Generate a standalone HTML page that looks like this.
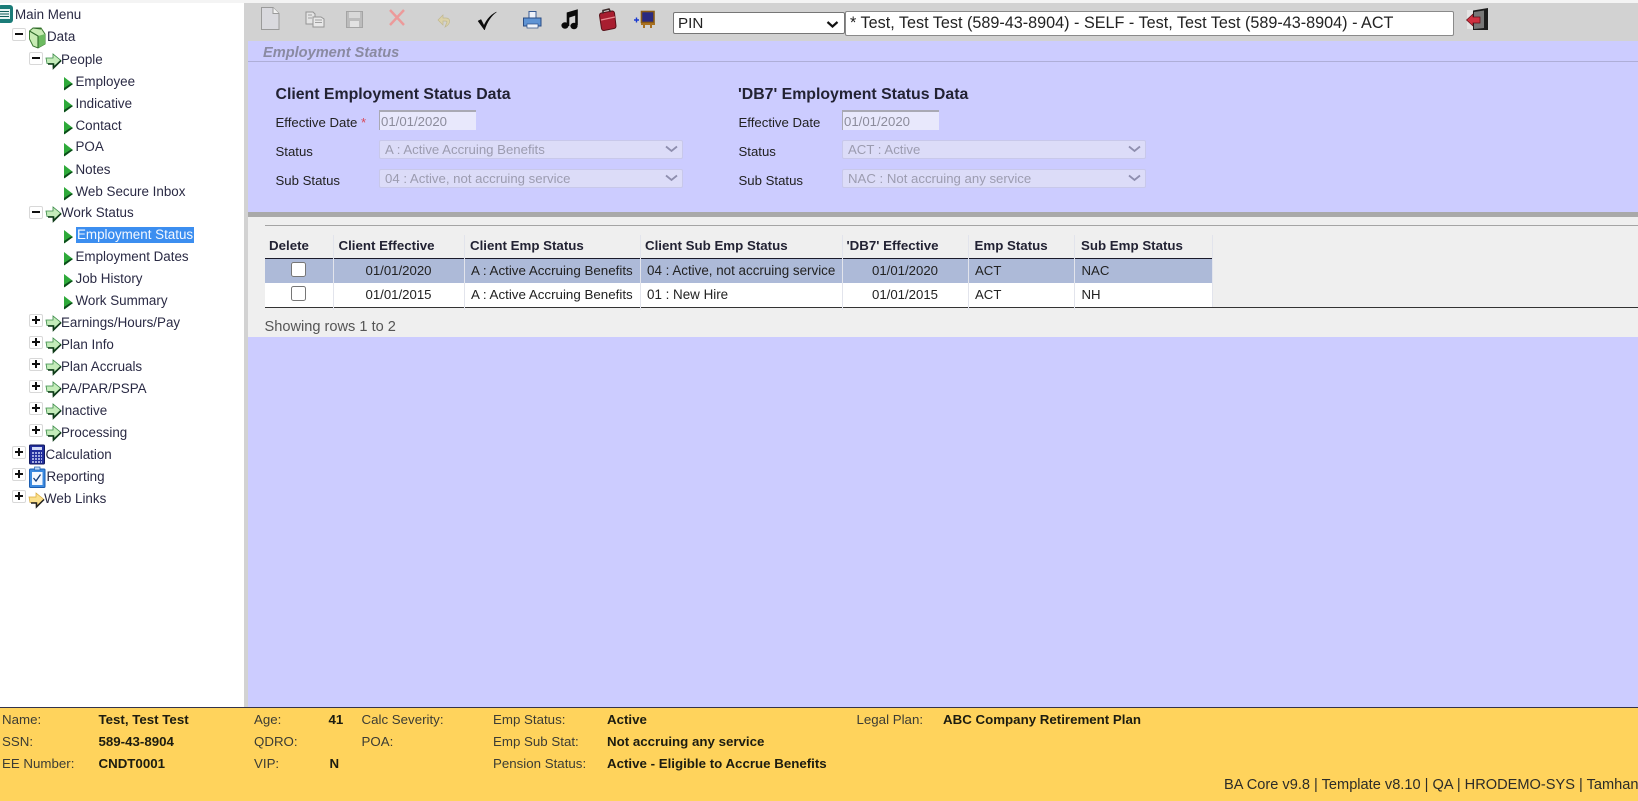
<!DOCTYPE html>
<html lang="en"><head><meta charset="utf-8"><title>Employment Status</title>
<style>
html,body{margin:0;padding:0;width:1638px;height:801px;overflow:hidden;background:#fff}
body{position:relative;font-family:"Liberation Sans",Arial,sans-serif;font-size:13.2px;color:#222}
#page{position:absolute;left:0;top:0;width:1638px;height:801px;overflow:hidden;filter:blur(.35px)}
.b{position:absolute}
.t{position:absolute;white-space:nowrap;line-height:16px;height:16px}
.h{font-weight:bold;color:#223;font-size:13.3px}
.c{text-align:center}
.f{font-size:13.3px}
.fb{font-size:13.3px;font-weight:bold;color:#1c1c10}
.fl{color:#3c3c34}
.tree{color:#2a2a44;font-size:13.4px}
.ctl{position:absolute;box-sizing:border-box;margin:0;font-family:"Liberation Sans",Arial,sans-serif}
select.dis{appearance:none;-webkit-appearance:none;background:#dcdcf8;border:1px solid #c8c8ea;border-radius:2px;color:#9c9cb0;font-size:13.2px;padding:0 0 0 5px;height:19px;width:304px;opacity:1}
input.dis{background:#e8e8fc;border:0;border-top:2px solid #a9a9b4;border-left:1px solid #a9a9b4;color:#8c8c9c;font-size:13.2px;padding:0 0 0 1px;height:20px;width:97px}
.pm{position:absolute;width:14px;height:13px;box-sizing:border-box;border:1px solid #d8d8d8;border-radius:2px;background:#fff}
.pm:before{content:"";position:absolute;left:2px;top:4px;width:8px;height:2px;background:#111}
.pm.p:after{content:"";position:absolute;left:5px;top:1px;width:2px;height:8px;background:#111}
.v{position:absolute;width:1px;background:#e2e4ec}
</style></head><body><div id="page">

<!-- main backgrounds -->
<div class="b" style="left:0;top:0;width:1638px;height:3px;background:#f4f4f4"></div>
<div class="b" style="left:0;top:3px;width:244px;height:705px;background:#fff"></div>
<div class="b" style="left:244px;top:3px;width:4px;height:705px;background:#d2d2d2"></div>
<div class="b" style="left:248px;top:3px;width:1390px;height:38px;background:#d2d2d2"></div>
<div class="b" style="left:248px;top:41px;width:1390px;height:667px;background:#ccccff"></div>
<div class="b" style="left:248px;top:61px;width:1390px;height:1px;background:#aeaed8"></div>

<!-- TREE -->
<div class="pm" style="left:12px;top:28px"></div>
<div class="pm" style="left:29px;top:52px"></div>
<div class="pm" style="left:29px;top:206px"></div>
<div class="pm p" style="left:29px;top:314px"></div>
<div class="pm p" style="left:29px;top:336px"></div>
<div class="pm p" style="left:29px;top:358px"></div>
<div class="pm p" style="left:29px;top:380px"></div>
<div class="pm p" style="left:29px;top:402px"></div>
<div class="pm p" style="left:29px;top:424px"></div>
<div class="pm p" style="left:12px;top:446px"></div>
<div class="pm p" style="left:12px;top:468px"></div>
<div class="pm p" style="left:12px;top:490px"></div>

<svg class="b" style="left:0;top:0" width="1638" height="801" viewBox="0 0 1638 801">
<defs>
<g id="tri"><path d="M1 0L10 7L2 13L1 13Z" fill="#2eaa3a"/><path d="M1 13.500L10 7L8 6.500L1 11Z" fill="#0c4a1a"/></g>
<g id="arr"><path d="M0 4H7V0L15 6.500L7 13V9.500H1Z" fill="#c4ecba" stroke="#3a8a48" stroke-width=".8"/><path d="M2 10H7.500V14L15 6.500" fill="none" stroke="#0f3a18" stroke-width="1.600"/></g>
</defs>
<!-- main menu icon -->
<rect x="-2" y="5" width="15" height="18" rx="3" fill="#1b7c78"/>
<rect x="-1" y="9" width="11" height="10" fill="#e8f4f2"/>
<path d="M0 11.500H9M0 14H9M0 16.500H9" stroke="#14605c" stroke-width="1"/>
<!-- data book -->
<path d="M29.500 31L33 28H41L45 34V44L38 48L33 46L29.500 39Z" fill="#c8ecb4" stroke="#3c7a32" stroke-width="1"/>
<path d="M38 36L45 34V44L38 48Z" fill="#6cba60"/>
<path d="M29.500 31L38 36V48M33 28L41 29" fill="none" stroke="#2f6a2a" stroke-width="1.100"/>
<!-- group arrows -->
<use href="#arr" x="46" y="54"/><use href="#arr" x="46" y="207"/>
<use href="#arr" x="46" y="316"/><use href="#arr" x="46" y="338"/><use href="#arr" x="46" y="360"/>
<use href="#arr" x="46" y="382"/><use href="#arr" x="46" y="404"/><use href="#arr" x="46" y="426"/>
<!-- leaf triangles -->
<use href="#tri" x="63" y="77"/><use href="#tri" x="63" y="99"/><use href="#tri" x="63" y="121"/>
<use href="#tri" x="63" y="143"/><use href="#tri" x="63" y="165"/><use href="#tri" x="63" y="187"/>
<use href="#tri" x="63" y="230"/><use href="#tri" x="63" y="252"/><use href="#tri" x="63" y="274"/><use href="#tri" x="63" y="296"/>
<!-- calculator -->
<rect x="29.500" y="445" width="15" height="19" rx="1" fill="#222e9c" stroke="#10185e"/>
<rect x="32" y="447" width="10" height="3" fill="#d4dcf8"/>
<path d="M32 453H42M32 456H42M32 459H42M32 462H42" stroke="#cfd6f8" stroke-width="1.400" stroke-dasharray="2 1"/>
<!-- reporting clipboard -->
<rect x="29.500" y="469" width="15.500" height="18.500" rx="1" fill="#3c8ae0" stroke="#1a5cb0"/>
<rect x="32" y="472" width="10.500" height="13" fill="#f4f8ff"/>
<rect x="34.500" y="467" width="5.500" height="3" fill="#bcd8f6" stroke="#1a5cb0" stroke-width=".7"/>
<path d="M33.500 478L36 481L40.500 474.500" fill="none" stroke="#113a78" stroke-width="1.300"/>
<!-- web links arrow -->
<path d="M29 497H36V493L44 499.500L36 506V502.500H30Z" fill="#fbe08c" stroke="#d8a838" stroke-width=".7"/>
<path d="M31 503H36.500V507L44 499.500" fill="none" stroke="#222" stroke-width="1.500"/>

<!-- TOOLBAR -->
<path d="M261.500 7.500H273L279 13.500V29.500H261.500Z" fill="#d9d9de" stroke="#9a9a9a"/><path d="M273 7.500V13.500H279" fill="#f2f2f2" stroke="#9a9a9a"/>
<path d="M306 12H313L315 14V24H306Z" fill="#e4e4e4" stroke="#949494"/><path d="M313 17H321L324 19V27H313Z" fill="#e8e8e8" stroke="#949494"/><path d="M315 20H322M315 22.500H322M308 15H312M308 18H312" stroke="#a0a0a0"/>
<rect x="346.500" y="11.500" width="16" height="16" fill="#bcbcbc" stroke="#a4a4a4"/><rect x="349" y="12" width="11" height="6" fill="#d8d8d8"/><rect x="350" y="21" width="9" height="6" fill="#e2e2e2"/>
<path d="M390 10L404 25M404 10L390 25" stroke="#ec9a9a" stroke-width="2.400"/>
<path d="M438 20L443 15V18H446C451 18 451 24 445 27L447 22C447 21 446 21 444 21H443V25Z" fill="#dcd2a8" stroke="#c0b890" stroke-width=".7"/>
<path d="M478 21L484.500 30C487 22 491 16 496.500 12C490 15 486.500 20 484 25.500L481 19.500Z" fill="#0c0c0c" stroke="#0c0c0c" stroke-width=".5"/>
<path d="M529 11.500H536V18H529Z" fill="#eef2fa" stroke="#3a5c94"/>
<path d="M523.500 18H541V26H523.500Z" fill="#5f94d4" stroke="#2a4c84"/><rect x="527" y="24" width="11" height="4" fill="#f0f4fa" stroke="#2a4c84" stroke-width=".7"/>
<path d="M568 26V13.500L576.500 11V25" fill="none" stroke="#0a0a0a" stroke-width="2.600"/><ellipse cx="565" cy="25.500" rx="3.600" ry="3.200" fill="#0a0a0a"/><ellipse cx="574" cy="26" rx="3.600" ry="3.200" fill="#0a0a0a"/><path d="M568 14L577 11V15L568 18Z" fill="#0a0a0a"/>
<path d="M599.500 15.500Q599.500 13.500 601.500 13L612 11Q614 11 614.500 13L616 26Q616 28 614 28.500L604 30.500Q602 30.500 601.500 28.500Z" fill="#a81e30" stroke="#5a1018"/><path d="M603 13.500V10.500L609 9L610.500 12" fill="none" stroke="#3c2a2a" stroke-width="1.600"/><path d="M601 20L615 17" stroke="#e88a90" stroke-width="1.200"/>
<rect x="641.500" y="11.500" width="12.500" height="11" fill="#2a2a80" stroke="#8a5a14" stroke-width="1.600"/><path d="M641 23H655V25H641ZM643 25H645V28H643ZM650 25H652V28H650Z" fill="#a87020"/>
<path d="M634 20H639M636.500 17.500V22.500" stroke="#1a3ad0" stroke-width="1.400"/>
<!-- logout -->
<path d="M1467 10H1476V29H1467Z" fill="#e4e4e4"/>
<path d="M1473 10.500L1488 8V30H1473Z" fill="#1c1c1c"/><path d="M1474 12L1484 10.500V28L1474 29Z" fill="#777"/>
<path d="M1466.500 20L1473 14V17H1480V23H1473V26Z" fill="#d03040" stroke="#601018" stroke-width=".7"/>
</svg>

<div class="t tree" style="left:15px;top:7px">Main Menu</div>
<div class="t tree" style="left:47px;top:29px">Data</div>
<div class="t tree" style="left:61px;top:52px">People</div>
<div class="t tree" style="left:75.500px;top:74px">Employee</div>
<div class="t tree" style="left:75.500px;top:96px">Indicative</div>
<div class="t tree" style="left:75.500px;top:118px">Contact</div>
<div class="t tree" style="left:75.500px;top:139px">POA</div>
<div class="t tree" style="left:75.500px;top:162px">Notes</div>
<div class="t tree" style="left:75.500px;top:184px">Web Secure Inbox</div>
<div class="t tree" style="left:61px;top:205px">Work Status</div>
<div class="b" style="left:76px;top:227px;width:118px;height:16px;background:#3c8ef0"></div>
<div class="t" style="left:77px;top:227px;color:#f4f8ff;font-size:13.400px">Employment Status</div>
<div class="t tree" style="left:75.500px;top:249px">Employment Dates</div>
<div class="t tree" style="left:75.500px;top:271px">Job History</div>
<div class="t tree" style="left:75.500px;top:293px">Work Summary</div>
<div class="t tree" style="left:61px;top:315px">Earnings/Hours/Pay</div>
<div class="t tree" style="left:61px;top:337px">Plan Info</div>
<div class="t tree" style="left:61px;top:359px">Plan Accruals</div>
<div class="t tree" style="left:61px;top:381px">PA/PAR/PSPA</div>
<div class="t tree" style="left:61px;top:403px">Inactive</div>
<div class="t tree" style="left:61px;top:425px">Processing</div>
<div class="t tree" style="left:45.500px;top:447px">Calculation</div>
<div class="t tree" style="left:46.500px;top:469px">Reporting</div>
<div class="t tree" style="left:44px;top:491px">Web Links</div>

<!-- TOOLBAR CONTROLS -->
<select class="ctl" style="left:673px;top:12px;width:172px;height:22px;font-size:15.200px;background:#fff;border:1px solid #767676;border-radius:2px;color:#222;padding:0 0 0 4px;appearance:none;-webkit-appearance:none"><option>PIN</option></select>
<svg class="b" style="left:820px;top:15px" width="22" height="16" viewBox="0 0 22 16"><path d="M7.500 7L12.500 11.500L17.500 7" fill="none" stroke="#111" stroke-width="2.200"/></svg>
<input class="ctl" style="left:845px;top:11px;width:609px;height:25px;font-size:16.200px;background:#fff;border:1px solid #8a8a8a;border-radius:2px;color:#222;padding:0 0 1px 4px" value="* Test, Test Test (589-43-8904) - SELF - Test, Test Test (589-43-8904) - ACT">

<div class="t" style="left:263px;top:45px;font-weight:bold;font-style:italic;font-size:14.600px;color:#8a8aa2">Employment Status</div>

<!-- FORM LEFT -->
<div class="t h" style="left:275.500px;top:87px;font-size:15.850px">Client Employment Status Data</div>
<div class="t" style="left:275.500px;top:115px">Effective Date <span style="color:#d84a5a">*</span></div>
<input class="ctl dis" style="left:379px;top:110px" value="01/01/2020" disabled>
<div class="t" style="left:275.500px;top:144px">Status</div>
<select class="ctl dis" style="left:379px;top:140px" disabled><option>A : Active Accruing Benefits</option></select>
<div class="t" style="left:275.500px;top:173px">Sub Status</div>
<select class="ctl dis" style="left:379px;top:169px" disabled><option>04 : Active, not accruing service</option></select>

<!-- FORM RIGHT -->
<div class="t h" style="left:738px;top:87px;font-size:15.850px">'DB7' Employment Status Data</div>
<div class="t" style="left:738.500px;top:115px">Effective Date</div>
<input class="ctl dis" style="left:842px;top:110px" value="01/01/2020" disabled>
<div class="t" style="left:738.500px;top:144px">Status</div>
<select class="ctl dis" style="left:842px;top:140px" disabled><option>ACT : Active</option></select>
<div class="t" style="left:738.500px;top:173px">Sub Status</div>
<select class="ctl dis" style="left:842px;top:169px" disabled><option>NAC : Not accruing any service</option></select>

<!-- disabled select chevrons -->
<svg class="b" style="left:0;top:0" width="1638" height="801" viewBox="0 0 1638 801">
<path d="M666 146.500L671.500 151L677 146.500M666 175.500L671.500 180L677 175.500M1129 146.500L1134.500 151L1140 146.500M1129 175.500L1134.500 180L1140 175.500" fill="none" stroke="#8e8eae" stroke-width="1.800"/>
</svg>

<!-- TABLE AREA -->
<div class="b" style="left:248px;top:212px;width:1390px;height:5px;background:#a9a9a9"></div>
<div class="b" style="left:248px;top:217px;width:1390px;height:120px;background:#efefef"></div>
<div class="b" style="left:264.500px;top:225px;width:1374px;height:1px;background:#a4a4a4"></div>
<div class="b" style="left:264.500px;top:258px;width:947.500px;height:1px;background:#1a1a2a"></div>
<div class="b" style="left:264.500px;top:259px;width:947.500px;height:24px;background:#adbad8"></div>
<div class="b" style="left:264.500px;top:283px;width:947.500px;height:24px;background:#fff"></div>
<div class="b" style="left:264.500px;top:307px;width:1374px;height:1px;background:#333"></div>
<div class="v" style="left:333px;top:235px;height:75px"></div>
<div class="v" style="left:464px;top:235px;height:75px"></div>
<div class="v" style="left:640px;top:235px;height:75px"></div>
<div class="v" style="left:842px;top:235px;height:75px"></div>
<div class="v" style="left:968px;top:235px;height:75px"></div>
<div class="v" style="left:1074px;top:235px;height:75px"></div>
<div class="v" style="left:1212px;top:235px;height:72px"></div>

<div class="t h" style="left:269px;top:238px">Delete</div>
<div class="t h" style="left:338.500px;top:238px">Client Effective</div>
<div class="t h" style="left:470px;top:238px">Client Emp Status</div>
<div class="t h" style="left:645px;top:238px">Client Sub Emp Status</div>
<div class="t h" style="left:846.500px;top:238px">'DB7' Effective</div>
<div class="t h" style="left:974.500px;top:238px">Emp Status</div>
<div class="t h" style="left:1081px;top:238px">Sub Emp Status</div>

<input type="checkbox" class="ctl" style="left:291px;top:262px;width:15px;height:15px">
<div class="t c" style="left:333px;width:131px;top:263px">01/01/2020</div>
<div class="t" style="left:471px;top:263px;font-size:13.350px">A : Active Accruing Benefits</div>
<div class="t" style="left:647px;top:263px;font-size:13.400px">04 : Active, not accruing service</div>
<div class="t c" style="left:842px;width:126px;top:263px">01/01/2020</div>
<div class="t" style="left:975px;top:263px">ACT</div>
<div class="t" style="left:1081.500px;top:263px">NAC</div>

<input type="checkbox" class="ctl" style="left:291px;top:286px;width:15px;height:15px">
<div class="t c" style="left:333px;width:131px;top:287px">01/01/2015</div>
<div class="t" style="left:471px;top:287px;font-size:13.350px">A : Active Accruing Benefits</div>
<div class="t" style="left:647px;top:287px;font-size:13.400px">01 : New Hire</div>
<div class="t c" style="left:842px;width:126px;top:287px">01/01/2015</div>
<div class="t" style="left:975px;top:287px">ACT</div>
<div class="t" style="left:1081.500px;top:287px">NH</div>

<div class="t" style="left:264.500px;top:319px;font-size:14.600px;color:#555">Showing rows 1 to 2</div>

<!-- FOOTER -->
<div class="b" style="left:0;top:707px;width:1638px;height:1px;background:#33334a"></div>
<div class="b" style="left:0;top:708px;width:1638px;height:93px;background:#ffd35c"></div>
<div class="t f fl" style="left:2px;top:712px">Name:</div>
<div class="t f fl" style="left:2px;top:734px">SSN:</div>
<div class="t f fl" style="left:2px;top:756px">EE Number:</div>
<div class="t fb" style="left:98.500px;top:712px">Test, Test Test</div>
<div class="t fb" style="left:98.500px;top:734px">589-43-8904</div>
<div class="t fb" style="left:98.500px;top:756px">CNDT0001</div>
<div class="t f fl" style="left:254px;top:712px">Age:</div>
<div class="t f fl" style="left:254px;top:734px">QDRO:</div>
<div class="t f fl" style="left:254px;top:756px">VIP:</div>
<div class="t fb" style="left:328.500px;top:712px">41</div>
<div class="t fb" style="left:329.500px;top:756px">N</div>
<div class="t f fl" style="left:361.500px;top:712px">Calc Severity:</div>
<div class="t f fl" style="left:361.500px;top:734px">POA:</div>
<div class="t f fl" style="left:493px;top:712px">Emp Status:</div>
<div class="t f fl" style="left:493px;top:734px">Emp Sub Stat:</div>
<div class="t f fl" style="left:493px;top:756px">Pension Status:</div>
<div class="t fb" style="left:607px;top:712px">Active</div>
<div class="t fb" style="left:607px;top:734px">Not accruing any service</div>
<div class="t fb" style="left:607px;top:756px">Active - Eligible to Accrue Benefits</div>
<div class="t f fl" style="left:856.500px;top:712px">Legal Plan:</div>
<div class="t fb" style="left:943px;top:712px">ABC Company Retirement Plan</div>
<div class="t" style="left:1224px;top:777px;font-size:14.600px;color:#2c2c28">BA Core v9.8 | Template v8.10 | QA | HRODEMO-SYS | Tamhan</div>

</div></body></html>
